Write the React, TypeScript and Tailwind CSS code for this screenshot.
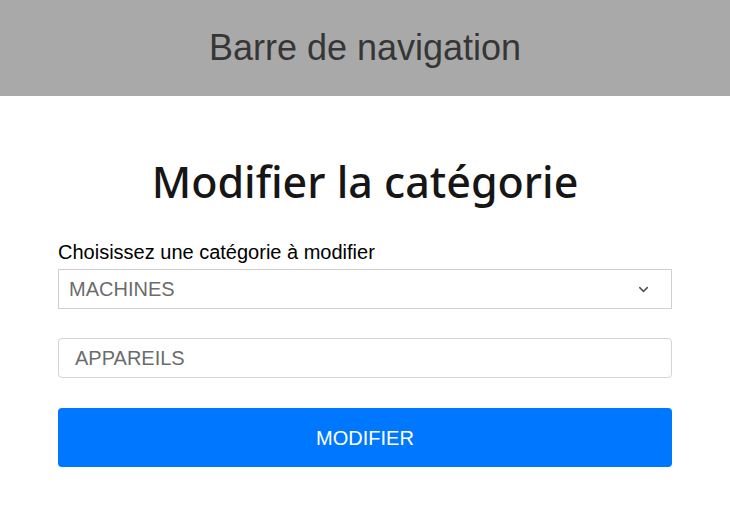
import { ChevronDown } from "lucide-react";

export default function App() {
  return (
    <div className="min-h-screen bg-white font-['Liberation_Sans',Arial,sans-serif]">
      <nav className="flex h-[96px] items-center justify-center bg-[#a9a9a9]">
        <span className="text-[36px] text-[#363636]">Barre de navigation</span>
      </nav>

      <main className="px-[58px]">
        <h1 className="mt-[54px] text-center font-['Noto_Sans',sans-serif] text-[43px] font-medium leading-[64px] text-[#161616]">
          Modifier la catégorie
        </h1>

        <form className="mt-[26px] flex flex-col" onSubmit={(e) => e.preventDefault()}>
          <label className="text-[20px] leading-[24px] text-black">
            Choisissez une catégorie à modifier
          </label>
          <div className="mt-[5px] flex h-[40px] items-center justify-between border border-[#cfcfcf] pl-[10px] pr-[20px]">
            <span className="text-[20px] text-[#6c6c6c]">MACHINES</span>
            <ChevronDown className="h-[15px] w-[15px] text-[#555]" strokeWidth={2.5} />
          </div>

          <div className="mt-[29px] flex h-[40px] items-center rounded-[4px] border border-[#d4d4d4] pl-[16px]">
            <span className="text-[20px] text-[#6c6c6c]">APPAREILS</span>
          </div>

          <button
            type="submit"
            className="mt-[30px] h-[59px] rounded-[4px] bg-[#0077ff] text-[20px] text-white"
          >
            MODIFIER
          </button>
        </form>
      </main>
    </div>
  );
}
